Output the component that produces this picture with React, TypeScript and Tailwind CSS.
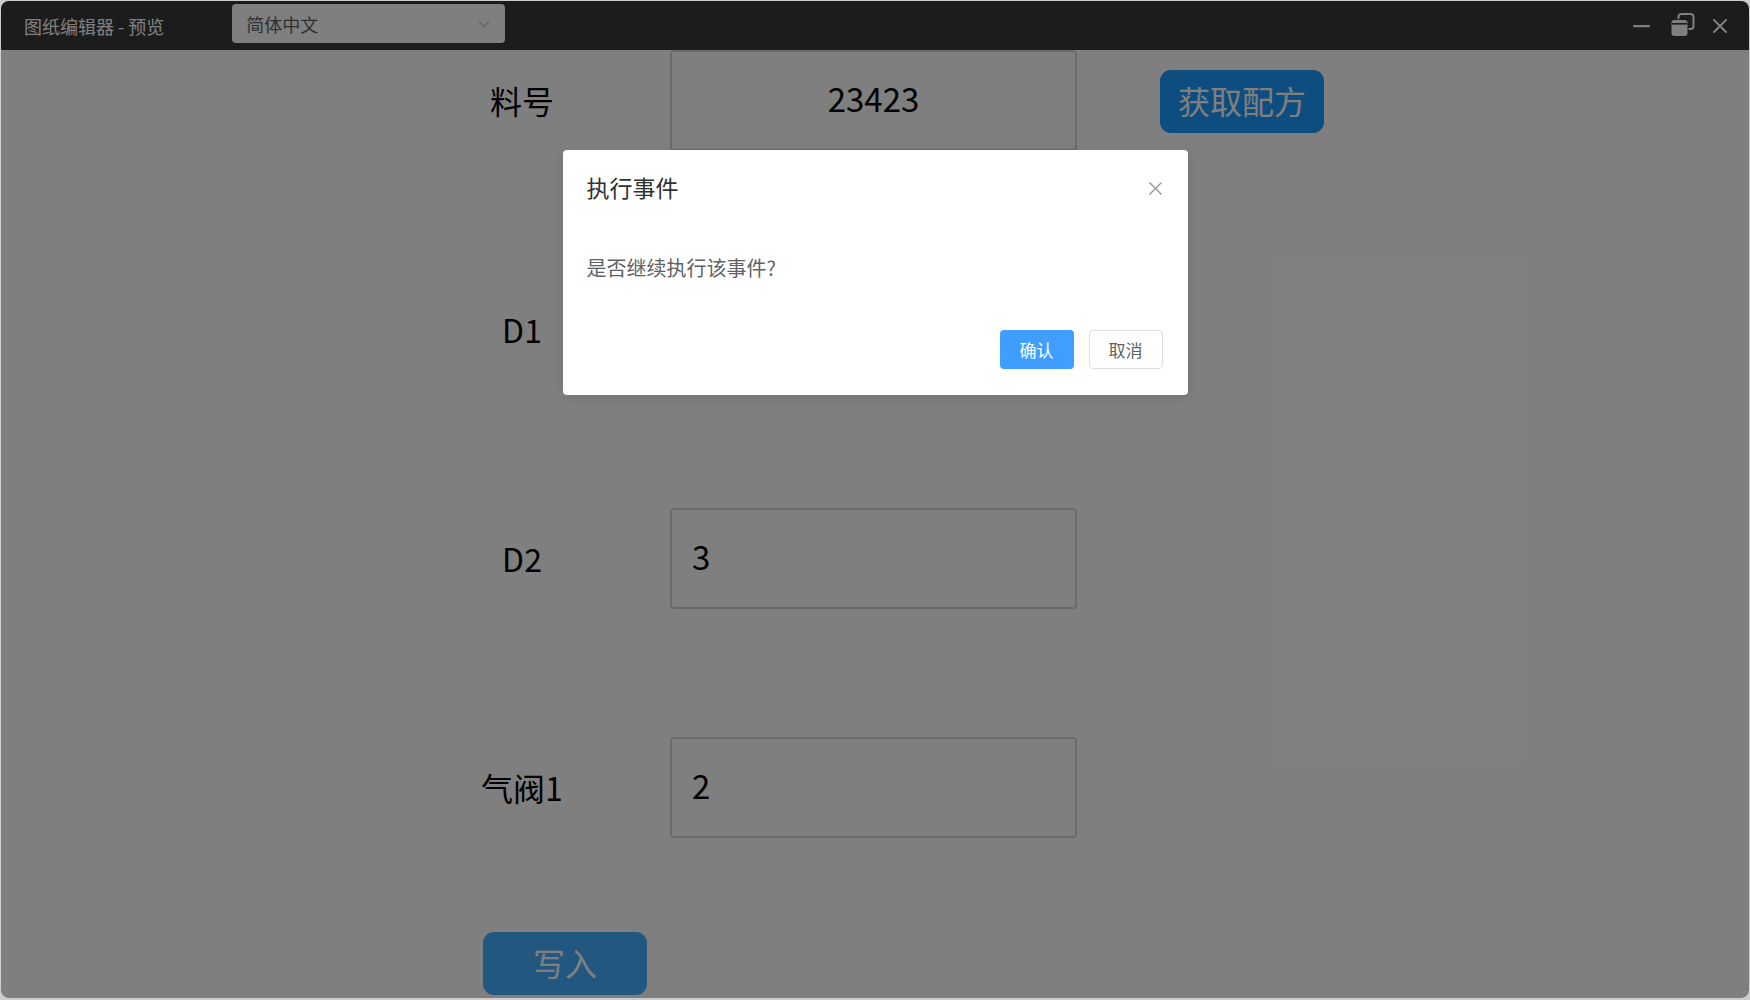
import React from "react";

const CJK = { fontFamily: '"Noto Sans CJK SC", "Noto Sans", sans-serif' };

function Row({ label, value, center, extra }: { label: string; value: string; center?: boolean; extra?: React.ReactNode }) {
  return (
    <div className="flex items-center h-[101px]">
      <div className="w-[160px] text-center text-[32px] text-black leading-none pb-[2px]">{label}</div>
      <div
        className={`ml-[68px] w-[407px] h-[101px] border-2 border-[#d6d6d6] rounded-[4px] bg-white flex items-center text-[33px] text-black leading-none pb-[5px] ${
          center ? "justify-center" : "pl-[20px]"
        }`}
      >
        {value}
      </div>
      {extra}
    </div>
  );
}

export default function App() {
  return (
    <div className="w-[1750px] h-[1000px] bg-[#cdcdcd] pt-px px-px pb-[2px] overflow-hidden" style={CJK}>
      <div className="relative w-full h-full rounded-[8px] overflow-hidden flex flex-col bg-white">
        {/* title bar */}
        <div className="h-[49px] shrink-0 bg-[#383838] flex items-center">
          <div className="ml-[23px] text-[18px] text-white leading-none">图纸编辑器 - 预览</div>
          <div className="ml-[68px] w-[273px] h-[39px] mt-[-4px] bg-white rounded-[4px] flex items-center justify-between pl-[14px] pr-[14px]">
            <span className="text-[18px] text-[#606266] leading-none">简体中文</span>
            <svg width="14" height="14" viewBox="0 0 14 14" fill="none" stroke="#c0c4cc" strokeWidth="1.3">
              <path d="M2 4.5 L7 9.5 L12 4.5" />
            </svg>
          </div>
          <div className="flex-1" />
          <div className="flex items-center mr-[21px] mt-[1px]">
            <svg width="20" height="24" viewBox="0 0 20 24" className="mr-[18px]">
              <rect x="1" y="11" width="17" height="2.2" rx="1" fill="#ffffff" />
            </svg>
            <svg width="25" height="24" viewBox="0 0 25 24" className="mr-[17px] mt-[-2px]">
              <rect x="8.5" y="1" width="15" height="15" rx="3" fill="none" stroke="#ffffff" strokeWidth="2" />
              <rect x="0.5" y="6" width="18" height="18" rx="3.5" fill="#383838" />
              <rect x="1.5" y="7" width="16" height="16" rx="3" fill="#ffffff" />
              <rect x="2" y="10" width="15" height="1.6" fill="#383838" />
            </svg>
            <svg width="16" height="16" viewBox="0 0 16 16" stroke="#ffffff" strokeWidth="2" strokeLinecap="round">
              <path d="M2 2 L14 14 M14 2 L2 14" />
            </svg>
          </div>
        </div>

        {/* content */}
        <div className="flex-1 pt-0 pl-[441px]">
          <div className="flex flex-col gap-[128px]">
            <Row
              label="料号"
              value="23423"
              center
              extra={
                <div className="ml-[83px] mt-[1px] w-[164px] h-[63px] rounded-[11px] bg-[#1a9aff] text-white text-[32px] flex items-center justify-center leading-none pb-[3px]">
                  获取配方
                </div>
              }
            />
            <Row label="D1" value="4" />
            <Row label="D2" value="3" />
            <Row label="气阀1" value="2" />
          </div>
          <div className="mt-[94px] ml-[41px] w-[164px] h-[63px] rounded-[11px] bg-[#44aefe] text-white text-[32px] flex items-center justify-center leading-none pb-[4px]">
            写入
          </div>
        </div>

        {/* modal overlay */}
        <div className="absolute inset-0 bg-black/50 flex justify-center items-start pt-[149px]">
          <div className="w-[625px] h-[245px] bg-white rounded-[4px] shadow-[0_2px_12px_rgba(0,0,0,0.1)] flex flex-col px-[24px]">
            <div className="flex items-center justify-between h-[40px] mt-[17px]">
              <span className="text-[23px] text-[#303133] leading-none">执行事件</span>
              <svg width="15" height="15" viewBox="0 0 15 15" stroke="#909399" strokeWidth="1.3" className="mr-[1px] mt-[2px]">
                <path d="M1.5 1.5 L13.5 13.5 M13.5 1.5 L1.5 13.5" />
              </svg>
            </div>
            <div className="mt-[51px] text-[20px] text-[#606266] leading-none">是否继续执行该事件?</div>
            <div className="mt-[52px] flex justify-end gap-[15px] pr-[1px]">
              <div className="w-[74px] h-[39px] rounded-[4px] bg-[#409eff] text-white text-[17px] flex items-center justify-center leading-none">
                确认
              </div>
              <div className="w-[74px] h-[39px] rounded-[4px] bg-white border border-[#dcdfe6] text-[#606266] text-[17px] flex items-center justify-center leading-none">
                取消
              </div>
            </div>
          </div>
        </div>
      </div>
    </div>
  );
}
